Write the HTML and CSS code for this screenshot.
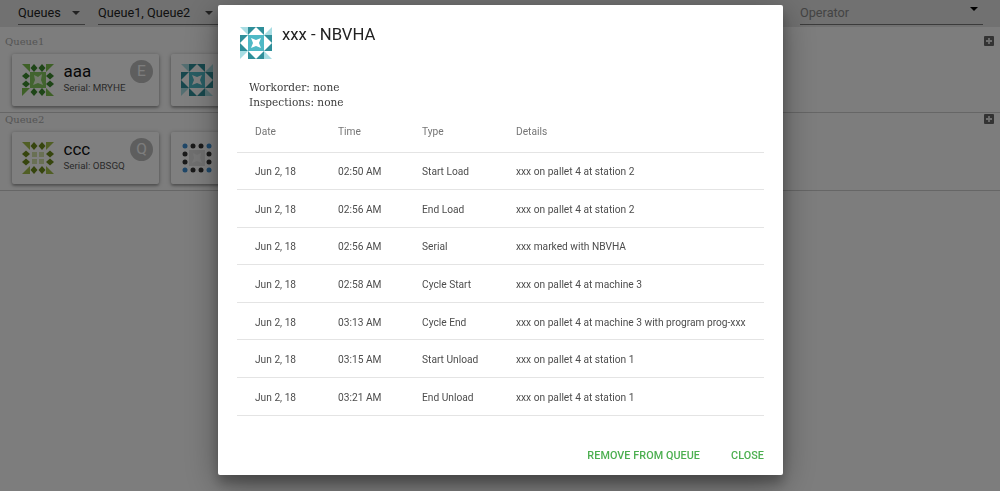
FILE: index.html
```html
<!DOCTYPE html>
<html lang="en">
<head>
    <meta charset="UTF-8">
    <meta name="viewport" content="width=device-width, initial-scale=1.0">
    <title>Queues</title>
    <link rel="stylesheet" href="styles.css">
</head>
<body>
    <svg class="defs" aria-hidden="true">
        <symbol id="icon-teal" viewBox="0 0 32 32">
            <g id="teal-side">
                <polygon fill="#2f8f9a" points="8,0 16,0 8,8"/>
                <polygon fill="#2f8f9a" points="16,0 24,0 24,8"/>
                <polygon fill="#a8dde3" points="0,0 8,0 8,8"/>
            </g>
            <use href="#teal-side" transform="rotate(90 16 16)"/>
            <use href="#teal-side" transform="rotate(180 16 16)"/>
            <use href="#teal-side" transform="rotate(270 16 16)"/>
            <rect x="8" y="8" width="16" height="16" fill="#4fb9c6"/>
            <polygon fill="#fff" points="11,11 16,13 21,11 19,16 21,21 16,19 11,21 13,16"/>
        </symbol>
        <symbol id="icon-green" viewBox="0 0 32 32">
            <polygon fill="#7cc04f" points="0,0 8,0 8,8"/>
            <polygon fill="#7cc04f" points="32,0 24,0 24,8"/>
            <polygon fill="#7cc04f" points="0,32 0,24 8,24"/>
            <polygon fill="#7cc04f" points="32,32 24,32 24,24"/>
            <g fill="#3c8a2e">
                <polygon points="12,0 15.5,4 12,8 8.500,4"/>
                <polygon points="20,0 23.5,4 20,8 16.5,4"/>
                <polygon points="12,24 15.5,28 12,32 8.500,28"/>
                <polygon points="20,24 23.5,28 20,32 16.5,28"/>
                <polygon points="4,8.500 8,12 4,15.5 0,12"/>
                <polygon points="4,16.5 8,20 4,23.5 0,20"/>
                <polygon points="28,8.500 32,12 28,15.5 24,12"/>
                <polygon points="28,16.5 32,20 28,23.5 24,20"/>
            </g>
            <rect x="8" y="8" width="16" height="16" fill="#84c95f"/>
            <polygon fill="#e8f5dd" points="12,11 16,13 20,10 19,16 21,21 16,19 11,21 13,16"/>
        </symbol>
        <symbol id="icon-olive" viewBox="0 0 32 32">
            <polygon fill="#a3bf4a" points="0,0 8,0 8,8"/>
            <polygon fill="#a3bf4a" points="32,0 24,0 24,8"/>
            <polygon fill="#a3bf4a" points="0,32 8,24 8,32"/>
            <polygon fill="#a3bf4a" points="32,32 24,24 24,32"/>
            <g fill="#6d8a1c">
                <polygon points="12,0 15.5,4 12,8 8.500,4"/>
                <polygon points="20,0 23.5,4 20,8 16.5,4"/>
                <polygon points="12,24 15.5,28 12,32 8.500,28"/>
                <polygon points="20,24 23.5,28 20,32 16.5,28"/>
                <polygon points="4,8.500 8,12 4,15.5 0,12"/>
                <polygon points="4,16.5 8,20 4,23.5 0,20"/>
                <polygon points="28,8.500 32,12 28,15.5 24,12"/>
                <polygon points="28,16.5 32,20 28,23.5 24,20"/>
            </g>
            <g fill="#d3e0a8">
                <rect x="10" y="10" width="5" height="5"/>
                <rect x="17" y="10" width="5" height="5"/>
                <rect x="10" y="17" width="5" height="5"/>
                <rect x="17" y="17" width="5" height="5"/>
            </g>
        </symbol>
        <symbol id="icon-dots" viewBox="0 0 32 32">
            <g fill="#3f8fd0">
                <circle cx="4" cy="4" r="2.500"/>
                <circle cx="28" cy="4" r="2.500"/>
                <circle cx="4" cy="28" r="2.500"/>
                <circle cx="28" cy="28" r="2.500"/>
            </g>
            <g fill="#333">
                <circle cx="12" cy="4" r="2.500"/>
                <circle cx="20" cy="4" r="2.500"/>
                <circle cx="12" cy="28" r="2.500"/>
                <circle cx="20" cy="28" r="2.500"/>
                <circle cx="4" cy="12" r="2.500"/>
                <circle cx="4" cy="20" r="2.500"/>
                <circle cx="28" cy="12" r="2.500"/>
                <circle cx="28" cy="20" r="2.500"/>
            </g>
            <rect x="8" y="8" width="16" height="16" fill="#e0e0e0"/>
            <polygon fill="#efefef" points="12,11 16,13 20,11 19,16 21,21 16,19 11,21 13,16"/>
        </symbol>
        <symbol id="icon-plus" viewBox="0 0 10 10">
            <rect width="10" height="10" rx="1" fill="#666"/>
            <path d="M5 2v6M2 5h6" stroke="#ddd" stroke-width="1.800"/>
        </symbol>
    </svg>

    <div class="toolbar">
        <div class="select select-queues"><span>Queues</span><i class="arrow"></i></div>
        <div class="select select-names"><span>Queue1, Queue2</span><i class="arrow"></i></div>
        <div class="select select-operator"><span class="placeholder">Operator</span><i class="arrow"></i></div>
    </div>

    <section class="queue">
        <div class="queue-head">
            <span>Queue1</span>
            <svg class="plus"><use href="#icon-plus"/></svg>
        </div>
        <div class="cards">
            <div class="card">
                <svg class="identicon"><use href="#icon-green"/></svg>
                <div class="card-text">
                    <div class="card-title">aaa</div>
                    <div class="card-serial">Serial: MRYHE</div>
                </div>
                <div class="avatar">E</div>
            </div>
            <div class="card">
                <svg class="identicon"><use href="#icon-teal"/></svg>
            </div>
        </div>
    </section>

    <section class="queue">
        <div class="queue-head">
            <span>Queue2</span>
            <svg class="plus"><use href="#icon-plus"/></svg>
        </div>
        <div class="cards">
            <div class="card">
                <svg class="identicon"><use href="#icon-olive"/></svg>
                <div class="card-text">
                    <div class="card-title">ccc</div>
                    <div class="card-serial">Serial: OBSGQ</div>
                </div>
                <div class="avatar">Q</div>
            </div>
            <div class="card">
                <svg class="identicon"><use href="#icon-dots"/></svg>
            </div>
        </div>
    </section>

    <div class="overlay"></div>

    <div class="dialog">
        <div class="dialog-title">
            <svg class="identicon"><use href="#icon-teal"/></svg>
            <h2>xxx - NBVHA</h2>
        </div>
        <div class="dialog-info">
            <div>Workorder: none</div>
            <div>Inspections: none</div>
        </div>
        <table class="events">
            <thead>
                <tr>
                    <th>Date</th>
                    <th>Time</th>
                    <th>Type</th>
                    <th>Details</th>
                </tr>
            </thead>
            <tbody>
                <tr><td>Jun 2, 18</td><td>02:50 AM</td><td>Start Load</td><td>xxx on pallet 4 at station 2</td></tr>
                <tr><td>Jun 2, 18</td><td>02:56 AM</td><td>End Load</td><td>xxx on pallet 4 at station 2</td></tr>
                <tr><td>Jun 2, 18</td><td>02:56 AM</td><td>Serial</td><td>xxx marked with NBVHA</td></tr>
                <tr><td>Jun 2, 18</td><td>02:58 AM</td><td>Cycle Start</td><td>xxx on pallet 4 at machine 3</td></tr>
                <tr><td>Jun 2, 18</td><td>03:13 AM</td><td>Cycle End</td><td>xxx on pallet 4 at machine 3 with program prog-xxx</td></tr>
                <tr><td>Jun 2, 18</td><td>03:15 AM</td><td>Start Unload</td><td>xxx on pallet 4 at station 1</td></tr>
                <tr><td>Jun 2, 18</td><td>03:21 AM</td><td>End Unload</td><td>xxx on pallet 4 at station 1</td></tr>
            </tbody>
        </table>
        <div class="dialog-actions">
            <button>REMOVE FROM QUEUE</button>
            <button>CLOSE</button>
        </div>
    </div>
</body>
</html>
```

FILE: styles.css
```css
html, body {
    height: 100%;
}
body {
    font-family: Roboto, sans-serif;
    margin: 0;
    background-color: #fafafa;
    overflow: hidden;
}
.defs {
    display: none;
}
.toolbar {
    display: flex;
    height: 27px;
    padding-left: 18px;
    background-color: #e2e2e2;
}
.select {
    display: flex;
    justify-content: space-between;
    box-sizing: border-box;
    height: 25px;
    padding: 5px 5px 0 0;
    font-size: 12.700px;
    color: #222;
    border-bottom: 1px solid #777;
}
.select-queues {
    width: 67px;
    margin-right: 13px;
}
.select-names {
    width: 120px;
    margin-right: 582px;
}
.select-operator {
    width: 183px;
}
.placeholder {
    color: #888;
}
.arrow {
    width: 0;
    height: 0;
    margin-top: 6px;
    border-left: 4px solid transparent;
    border-right: 4px solid transparent;
    border-top: 4px solid #444;
}
.select-operator .arrow {
    margin-top: 2px;
    border-top-color: #000;
}
.queue {
    height: 86px;
    padding: 9px 6px 0 5px;
    box-sizing: border-box;
    border-bottom: 1px solid #ccc;
}
.queue + .queue {
    height: 78px;
    padding-top: 1px;
}
.queue-head {
    display: flex;
    justify-content: space-between;
    align-items: center;
    height: 10px;
    font-family: "DejaVu Serif", serif;
    font-size: 10px;
    color: #aaa;
}
.plus {
    width: 10px;
    height: 10px;
}
.cards {
    display: flex;
    gap: 12px;
    margin: 8px 0 0 7px;
}
.card {
    display: flex;
    align-items: center;
    position: relative;
    box-sizing: border-box;
    width: 147px;
    height: 52px;
    padding: 0 9.500px;
    flex: none;
    background-color: #fff;
    border-radius: 2px;
    box-shadow: 0 1px 4px rgba(0, 0, 0, 0.35), 0 2px 2px rgba(0, 0, 0, 0.15);
}
.identicon {
    width: 32px;
    height: 32px;
    flex: none;
}
.card-text {
    margin-left: 10px;
    padding-bottom: 3px;
}
.card-title {
    font-size: 17px;
    line-height: 18px;
    color: #111;
}
.card-serial {
    font-size: 9.800px;
    line-height: 15px;
    color: #555;
}
.avatar {
    position: absolute;
    top: 6px;
    right: 6px;
    width: 23px;
    height: 23px;
    line-height: 23px;
    text-align: center;
    border-radius: 50%;
    font-size: 15.500px;
    color: #fafafa;
    background-color: #bdbdbd;
}
.overlay {
    position: fixed;
    top: 0;
    left: 0;
    right: 0;
    bottom: 0;
    background-color: rgba(0, 0, 0, 0.5);
}
.dialog {
    position: fixed;
    top: 5px;
    left: 218px;
    width: 565px;
    height: 470px;
    box-sizing: border-box;
    padding: 22px 19px 0;
    background-color: #fff;
    border-radius: 2px;
    box-shadow: 0 9px 35px rgba(0, 0, 0, 0.35), 0 8px 12px rgba(0, 0, 0, 0.25);
}
.dialog-title {
    display: flex;
    align-items: flex-start;
    padding-left: 3px;
    height: 32px;
}
.dialog-title h2 {
    margin: 0 0 0 10px;
    font-size: 16.700px;
    font-weight: 400;
    line-height: 15px;
    color: #222;
}
.dialog-info {
    margin: 21px 0 0 12px;
    font-family: "DejaVu Serif", serif;
    font-size: 10.550px;
    line-height: 14.500px;
    color: #3d3d3d;
}
.events {
    width: 527px;
    margin-top: 6px;
    table-layout: fixed;
    border-collapse: collapse;
    font-size: 10.200px;
}
.events th:nth-child(1) {
    width: 101px;
}
.events th:nth-child(2) {
    width: 84px;
}
.events th:nth-child(3) {
    width: 94px;
}
.events th, .events td {
    padding: 0 0 0 18px;
    text-align: left;
    border-bottom: 1px solid #e4e4e4;
    box-sizing: border-box;
}
.events th:not(:first-child), .events td:not(:first-child) {
    padding-left: 0;
}
.events th {
    height: 37px;
    padding-bottom: 3px;
    font-weight: 400;
    color: #757575;
}
.events td {
    height: 37.600px;
    padding-top: 2px;
    color: #4d4d4d;
}
.dialog-actions {
    display: flex;
    justify-content: flex-end;
    gap: 31px;
    margin-top: 33px;
}
.dialog-actions button {
    padding: 0;
    border: none;
    background: none;
    font-family: Roboto, sans-serif;
    font-size: 10.800px;
    font-weight: 500;
    letter-spacing: 0.070px;
    color: #4caf50;
    cursor: pointer;
}
```
